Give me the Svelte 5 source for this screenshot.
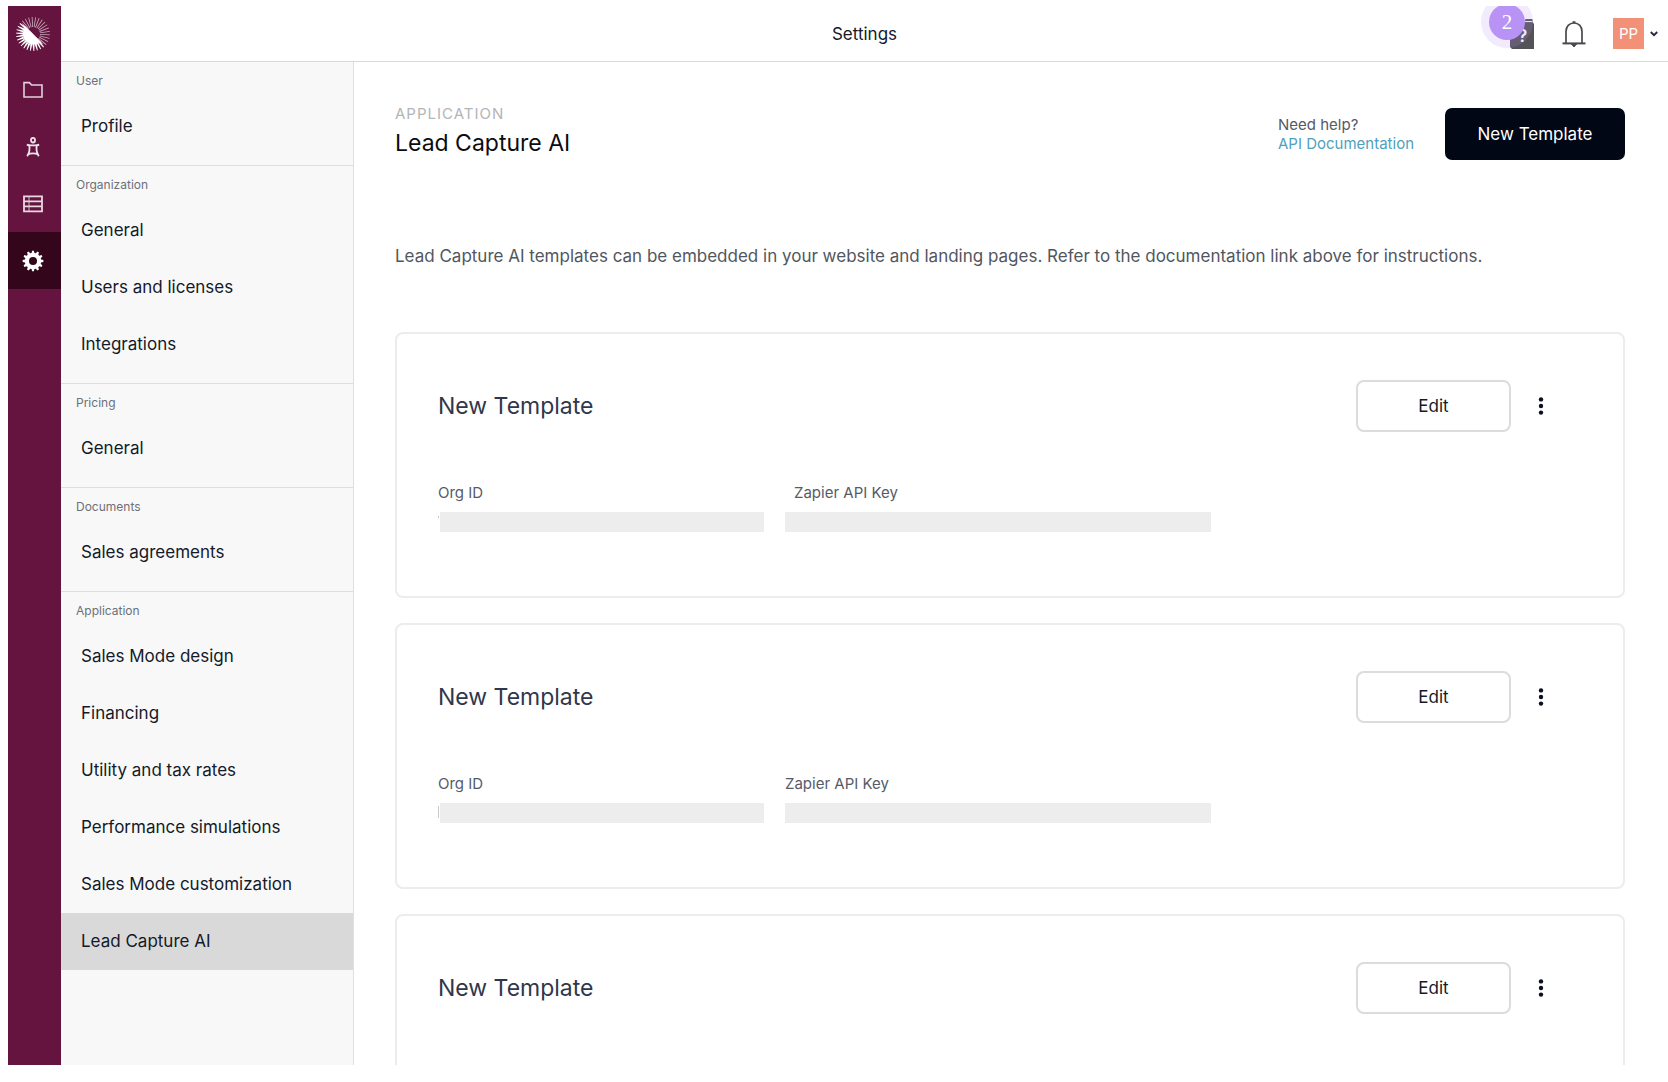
<script>
  const railItems = [
    { id: 'projects', label: 'Projects' },
    { id: 'contacts', label: 'Contacts' },
    { id: 'database', label: 'Database' },
    { id: 'settings', label: 'Settings' },
  ];

  const sections = [
    { title: 'User', items: ['Profile'] },
    { title: 'Organization', items: ['General', 'Users and licenses', 'Integrations'] },
    { title: 'Pricing', items: ['General'] },
    { title: 'Documents', items: ['Sales agreements'] },
    {
      title: 'Application',
      items: [
        'Sales Mode design',
        'Financing',
        'Utility and tax rates',
        'Performance simulations',
        'Sales Mode customization',
        'Lead Capture AI',
      ],
    },
  ];

  const templates = [
    { id: 1, name: 'New Template', hasKeys: true, mark: 'dot', indentKey: true },
    { id: 2, name: 'New Template', hasKeys: true, mark: 'bar', indentKey: false },
    { id: 3, name: 'New Template', hasKeys: false },
  ];

  let activeItem = $state('Lead Capture AI');

  function polar(r, deg) {
    const a = (deg * Math.PI) / 180;
    return `${(r * Math.cos(a)).toFixed(2)},${(r * Math.sin(a)).toFixed(2)}`;
  }

  // Sunburst logo: 30 rays, the lower left half is heavy, the rest is thin.
  const rays = Array.from({ length: 30 }, (_, i) => {
    const deg = i * 12 + 3;
    const heavy = deg > 45 && deg < 225;
    const spread = heavy ? 6 : 3.4;
    const inner = heavy ? 10 : 7;
    return {
      heavy,
      points: [
        polar(inner, deg - spread),
        polar(17, deg - 1.4),
        polar(17, deg + 1.4),
        polar(inner, deg + spread),
      ].join(' '),
    };
  });

  // Twelve-tooth gear outline, drawn around the origin.
  const gear = Array.from({ length: 12 }, (_, i) => {
    const deg = i * 30;
    return [polar(8.2, deg - 10), polar(10.4, deg - 5), polar(10.4, deg + 5), polar(8.2, deg + 10)].join(' ');
  }).join(' ');
</script>

<div class="app">
  <nav class="rail" aria-label="Main">
    <a class="logo" href="#home" aria-label="Home">
      <svg width="36" height="36" viewBox="-18 -18 36 36" fill="#fff">
        {#each rays as ray}
          <polygon points={ray.points} opacity={ray.heavy ? 1 : 0.65} />
        {/each}
        <!-- lower left half disc, then the long diagonal edge -->
        <path d="M-7.4 -7.4 L7.4 7.4 A10.47 10.47 0 0 1 -7.4 -7.4 Z" />
        <path d="M-11.5 -11.5 L10.5 10.5 L5 7 L-7 -5 Z" />
      </svg>
    </a>
    {#each railItems as item}
      <a class="rail-item" class:active={item.id === 'settings'} href="#{item.id}" aria-label={item.label}>
        {#if item.id === 'projects'}
          <svg width="20" height="18" viewBox="0 0 20 18" fill="none" stroke="#e3d0da" stroke-width="1.6">
            <path d="M1 1.6 H6.4 L8.6 4 H19 V16 H1 Z" />
          </svg>
        {:else if item.id === 'contacts'}
          <svg width="14" height="20" viewBox="0 0 14 20" fill="none" stroke="#f0e4ea" stroke-width="1.8">
            <ellipse cx="7" cy="3.2" rx="2" ry="2.3" />
            <path d="M0.8 7.6 C3 8.6 4 8.4 7 8.4 C10 8.4 11 8.6 13.2 7.6 M3.2 8.4 C4 12 3.8 15 1.2 19.2 M10.8 8.4 C10 12 10.2 15 12.8 19.2 M2.4 17.2 C4 16.2 10 16.2 11.6 17.2" />
          </svg>
        {:else if item.id === 'database'}
          <svg width="20" height="18" viewBox="0 0 20 18" fill="none" stroke="#e8d8e0" stroke-width="1.8">
            <path d="M1 1.4 H19 V16.4 H1 Z M1 6.4 H19 M1 11.4 H19" />
            <path d="M6 1.4 V16.4" stroke-width="1" opacity="0.8" />
          </svg>
        {:else}
          <svg width="22" height="22" viewBox="-11 -11 22 22">
            <polygon points={gear} fill="#fff" />
            <circle r="4" fill="#33061c" />
          </svg>
        {/if}
      </a>
    {/each}
  </nav>

  <div class="frame">
    <header class="topbar">
      <h1>Settings</h1>
      <div class="tools">
        <button class="help" aria-label="Help">
          <svg width="24" height="32" viewBox="0 0 24 32">
            <path d="M2 6 H14 L15.5 1 H22.5 V4 L24 6 V31 H2 L0 29 V6 Z" fill="#535357" />
            <path d="M15 3.6 H22" stroke="#fff" stroke-width="1" />
          </svg>
          <span class="mark">?</span>
          <span class="step">2</span>
        </button>
        <button class="bell" aria-label="Notifications">
          <svg width="24" height="28" viewBox="0 0 24 28" fill="none" stroke="#4a4a4e" stroke-width="1.7">
            <path d="M4 23 V11.5 C4 6.5 7.2 3 12 3 C16.8 3 20 6.5 20 11.5 V23" />
            <path d="M0.5 23.4 H23.5" stroke-width="2" />
            <path d="M9.4 24 H14.6 L12 27 Z" fill="#4a4a4e" stroke-width="1" />
            <path d="M10.6 2.2 H13.4" stroke-width="2" />
          </svg>
        </button>
        <button class="account" aria-label="Account">
          <span class="avatar">PP</span>
          <svg width="8" height="6" viewBox="0 0 8 6" fill="none" stroke="#23283a" stroke-width="1.8">
            <path d="M0.8 1 L4 4.2 L7.2 1" />
          </svg>
        </button>
      </div>
    </header>

    <div class="body">
      <nav class="sidebar" aria-label="Settings">
        {#each sections as section}
          <section class="group">
            <h2>{section.title}</h2>
            {#each section.items as item}
              <a
                class="link"
                class:active={item === activeItem}
                href="#{item.toLowerCase().replaceAll(' ', '-')}"
                onclick={() => (activeItem = item)}
              >{item}</a>
            {/each}
          </section>
        {/each}
      </nav>

      <main>
        <div class="page-head">
          <div class="heading">
            <p class="eyebrow">APPLICATION</p>
            <h2>Lead Capture AI</h2>
          </div>
          <div class="docs">
            <span>Need help?</span>
            <a href="#api-docs">API Documentation</a>
          </div>
          <button class="primary">New Template</button>
        </div>

        <p class="intro">
          Lead Capture AI templates can be embedded in your website and landing pages. Refer to the documentation link above for instructions.
        </p>

        <div class="cards">
          {#each templates as template (template.id)}
            <article class="card">
              <div class="card-head">
                <h3>{template.name}</h3>
                <button class="edit">Edit</button>
                <button class="more" aria-label="More options">
                  <svg width="6" height="20" viewBox="0 0 6 20" fill="#0b1020">
                    <circle cx="3" cy="3.4" r="2.2" />
                    <circle cx="3" cy="10" r="2.2" />
                    <circle cx="3" cy="16.6" r="2.2" />
                  </svg>
                </button>
              </div>
              {#if template.hasKeys}
                <dl class="fields">
                  <div class="field org">
                    <dt>Org ID</dt>
                    <dd><i class={template.mark}></i><span class="masked"></span></dd>
                  </div>
                  <div class="field key">
                    <dt class:indent={template.indentKey}>Zapier API Key</dt>
                    <dd><span class="masked"></span></dd>
                  </div>
                </dl>
              {/if}
            </article>
          {/each}
        </div>
      </main>
    </div>
  </div>
</div>

<style>
  :global(body) {
    background: #fff;
  }

  .app {
    display: flex;
    box-sizing: border-box;
    height: 100vh;
    padding: 6px 0 17px 8px;
    font-family: Inter, "Liberation Sans", sans-serif;
    font-size: 17px;
    color: #141a29;
  }

  h1,
  h2,
  h3,
  p,
  dl,
  dd {
    margin: 0;
    font-weight: 400;
  }

  a {
    text-decoration: none;
    color: inherit;
  }

  button {
    padding: 0;
    border: 0;
    background: none;
    font: inherit;
    color: inherit;
    cursor: pointer;
  }

  svg {
    display: block;
  }

  .rail {
    flex: 0 0 53px;
    display: flex;
    flex-direction: column;
    background: #651440;
  }

  .logo,
  .rail-item {
    display: flex;
    align-items: center;
    justify-content: center;
    height: 57px;
    padding-right: 4px;
  }

  .logo {
    height: 55px;
  }

  .rail-item.active {
    background: #33061c;
  }

  .frame {
    flex: 1;
    min-width: 0;
    display: flex;
    flex-direction: column;
  }

  .topbar {
    flex: 0 0 55px;
    display: grid;
    grid-template-columns: 1fr auto 1fr;
    align-items: center;
    border-bottom: 1px solid #d9d9d9;
    overflow: hidden;
  }

  .topbar h1 {
    grid-column: 2;
    font-size: 17px;
  }

  .tools {
    display: flex;
    align-items: center;
    justify-content: flex-end;
    padding-right: 10px;
  }

  .help {
    position: relative;
    margin-right: 28px;
  }

  .mark {
    position: absolute;
    left: 8px;
    top: 8px;
    font-size: 17px;
    line-height: 20px;
    font-weight: 600;
    color: #fff;
  }

  /* onboarding step marker over the help icon */
  .step {
    position: absolute;
    left: -21px;
    top: -14px;
    width: 36px;
    height: 36px;
    border-radius: 50%;
    background: #b892f5;
    box-shadow: 0 0 0 8px rgba(184, 146, 245, 0.18);
    font-family: "Liberation Serif", serif;
    font-size: 21px;
    line-height: 36px;
    color: #fff;
  }

  .bell {
    margin-right: 27px;
  }

  .account {
    display: flex;
    align-items: center;
    gap: 6px;
  }

  .avatar {
    width: 31px;
    height: 31px;
    background: #f29078;
    font-size: 15px;
    line-height: 31px;
    color: #fff;
  }

  .body {
    flex: 1;
    min-height: 0;
    display: flex;
  }

  .sidebar {
    flex: 0 0 293px;
    box-sizing: border-box;
    background: #f8f8f8;
    border-right: 1px solid #e0e0e0;
    overflow: hidden;
  }

  .group {
    padding-bottom: 10px;
    border-bottom: 1px solid #dedede;
  }

  .group:last-child {
    border-bottom: 0;
  }

  .group h2 {
    height: 36px;
    padding-left: 15px;
    font-size: 12px;
    line-height: 37px;
    color: #6c7078;
  }

  .link {
    display: block;
    height: 57px;
    padding-left: 20px;
    line-height: 57px;
  }

  .link.active {
    background: #d9d9d9;
  }

  main {
    flex: 1;
    min-width: 0;
    padding: 46px 43px 0 41px;
    overflow: auto;
    scrollbar-width: none;
  }

  .page-head {
    display: flex;
    align-items: center;
    height: 52px;
  }

  .heading {
    flex: 1;
  }

  .eyebrow {
    font-size: 15px;
    line-height: 18px;
    letter-spacing: 1px;
    color: #b3b5b9;
  }

  .heading h2 {
    font-size: 23px;
    line-height: 40px;
    color: #0b0d12;
  }

  .docs {
    display: flex;
    flex-direction: column;
    margin-right: 31px;
    font-size: 15px;
    line-height: 19px;
    color: #555a66;
  }

  .docs a {
    color: #4f9fbe;
  }

  .primary {
    width: 180px;
    height: 52px;
    border-radius: 7px;
    background: #020715;
    color: #fff;
  }

  .intro {
    margin-top: 82px;
    line-height: 28px;
    color: #51565f;
  }

  .cards {
    display: flex;
    flex-direction: column;
    gap: 25px;
    margin-top: 62px;
  }

  .card {
    padding: 46px 72px 64px 41px;
    border: 2px solid #ececec;
    border-radius: 8px;
  }

  .card-head {
    display: flex;
    align-items: center;
  }

  .card h3 {
    flex: 1;
    font-size: 23px;
    color: #30374a;
  }

  .edit {
    width: 155px;
    height: 52px;
    border: 2px solid #dcdcdc;
    border-radius: 8px;
  }

  .more {
    width: 20px;
    height: 40px;
    margin-left: 20px;
    display: flex;
    align-items: center;
    justify-content: center;
  }

  .fields {
    display: flex;
    gap: 21px;
    margin-top: 50px;
  }

  .org {
    flex: 0 1 326px;
  }

  .key {
    flex: 0 1 426px;
  }

  dt {
    font-size: 15px;
    line-height: 22px;
    color: #565b68;
  }

  .indent {
    padding-left: 9px;
  }

  dd {
    display: flex;
    height: 20px;
    margin-top: 8px;
  }

  .masked {
    flex: 1;
    background: #ededed;
  }

  .dot,
  .bar {
    width: 1px;
    margin-right: 1px;
    background: #c9c9cc;
  }

  .dot {
    height: 2px;
    margin-top: 4px;
  }

  .bar {
    height: 12px;
    margin-top: 3px;
  }
</style>
